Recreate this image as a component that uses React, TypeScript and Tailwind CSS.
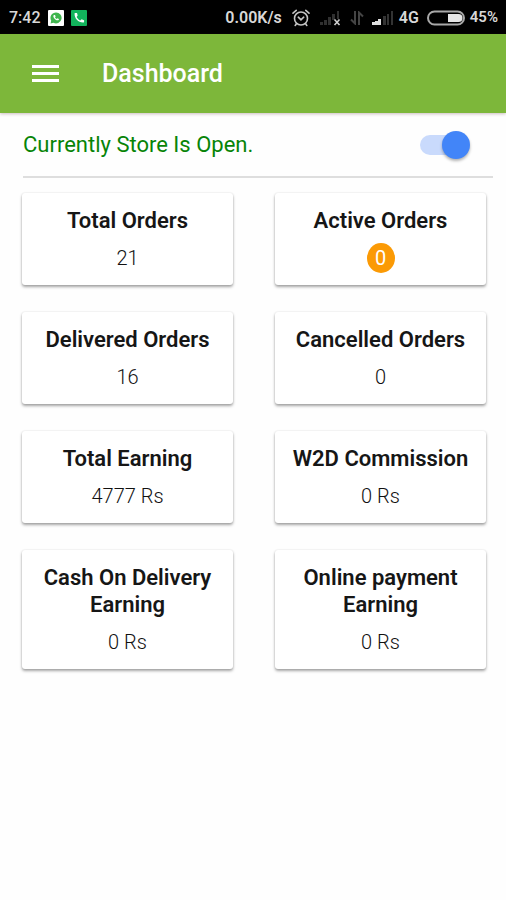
import { useState } from "react";

interface Stat {
  title: string;
  value: string;
  highlight?: boolean;
}

const stats: Stat[] = [
  { title: "Total Orders", value: "21" },
  { title: "Active Orders", value: "0", highlight: true },
  { title: "Delivered Orders", value: "16" },
  { title: "Cancelled Orders", value: "0" },
  { title: "Total Earning", value: "4777 Rs" },
  { title: "W2D Commission", value: "0 Rs" },
  { title: "Cash On Delivery Earning", value: "0 Rs" },
  { title: "Online payment Earning", value: "0 Rs" },
];

function WhatsAppIcon() {
  return (
    <svg viewBox="0 0 16 16" className="w-4 h-4" aria-hidden="true">
      <rect width="16" height="16" rx="1" fill="#fff" />
      <path d="M8 2.4a5.5 5.5 0 0 0-4.8 8.2L2.6 13.4l2.8-.7A5.5 5.5 0 1 0 8 2.4z" fill="#3fb54e" />
      <path
        d="M6 5c-.9.5-.9 1.6 0 2.9 1 1.5 2.3 2.4 3.6 2.4.8 0 1.4-.6 1.4-1.3L9.5 8.2l-.8.8C7.9 8.6 7.3 8 7 7.2l.7-.8L7 5z"
        fill="#fff"
      />
    </svg>
  );
}

function CallIcon() {
  return (
    <svg viewBox="0 0 16 16" className="w-4 h-4" aria-hidden="true">
      <rect width="16" height="16" rx="1" fill="#12b45c" />
      <path
        d="M3.6 3.4c-.4 4.8 4 9.3 8.9 9 .4 0 .6-.3.6-.6V10.2L10.6 9.3 9.2 10.5C7.7 9.8 6.3 8.4 5.6 6.9L6.7 5.5 6 3H4.2c-.3 0-.6.1-.6.4z"
        fill="#fff"
      />
    </svg>
  );
}

function AlarmIcon() {
  return (
    <svg
      viewBox="0 0 18 18"
      className="w-[18px] h-[18px]"
      fill="none"
      stroke="#c4c4c4"
      strokeWidth="1.6"
      strokeLinecap="round"
      aria-hidden="true"
    >
      <circle cx="9" cy="9.5" r="6.5" />
      <path d="M6.3 8.2 9 10.8l2.7-2.6M1 4.2 4.2 1.4M17 4.2l-3.2-2.8M4.6 14.6 3.2 16.4M13.4 14.6l1.4 1.8" />
    </svg>
  );
}

function NoSignalIcon() {
  return (
    <svg viewBox="0 0 22 16" className="w-[22px] h-4" aria-hidden="true">
      <g fill="#303030">
        <rect x="0" y="12" width="3" height="3" />
        <rect x="4" y="10" width="3" height="5" />
        <rect x="8" y="7" width="3" height="8" />
        <rect x="12" y="4" width="3" height="6" />
        <rect x="17" y="1" width="2" height="8" />
      </g>
      <path d="M14.5 9.5l5 5.5M19.5 9.5l-5 5.5" stroke="#d0d0d0" strokeWidth="1.6" />
    </svg>
  );
}

function DataIcon() {
  return (
    <svg viewBox="0 0 14 14" className="w-[14px] h-[14px]" fill="none" stroke="#444" strokeWidth="2" aria-hidden="true">
      <path d="M5 0v12.5L1 8.5M9 14V1.5l4 4" />
    </svg>
  );
}

function SignalIcon() {
  return (
    <svg viewBox="0 0 22 16" className="w-[22px] h-4" aria-hidden="true">
      <g fill="#dedede">
        <rect x="0" y="12" width="3" height="3" />
        <rect x="3" y="11" width="3" height="4" />
        <rect x="6" y="9" width="3" height="6" />
      </g>
      <g fill="#333">
        <rect x="11" y="6" width="3" height="9" />
        <rect x="15" y="4" width="2" height="11" />
        <rect x="19" y="1" width="2" height="14" />
      </g>
    </svg>
  );
}

function BatteryIcon() {
  return (
    <svg viewBox="0 0 38 16" className="w-[38px] h-4" aria-hidden="true">
      <rect x="1" y="1.5" width="36" height="13" rx="6.5" fill="#000" stroke="#a8a8a8" strokeWidth="2" />
      <path d="M21 4h10.5a4 4 0 0 1 0 8H21z" fill="#e6e6e6" />
    </svg>
  );
}

function StatusBar() {
  return (
    <div className="flex h-[34px] items-center justify-between bg-black pt-px pr-2 pl-[9px] text-base font-semibold text-[#d8d8d8]">
      <div className="flex items-center gap-[7px]">
        <span className="font-medium">7:42</span>
        <WhatsAppIcon />
        <CallIcon />
      </div>
      <div className="flex items-center gap-2">
        <div className="flex items-center gap-[10px]">
          <span>0.00K/s</span>
          <AlarmIcon />
          <NoSignalIcon />
        </div>
        <DataIcon />
        <div className="flex items-center gap-[5px]">
          <SignalIcon />
          <span>4G</span>
        </div>
        <div className="flex items-center gap-[5px]">
          <BatteryIcon />
          <span className="text-[15px]">45%</span>
        </div>
      </div>
    </div>
  );
}

function StatCard({ title, value, highlight }: Stat) {
  return (
    <section className="flex flex-col items-center gap-[11px] rounded-[3px] bg-white px-3 pt-[14px] pb-[13px] text-center shadow-[0_2px_3px_rgba(0,0,0,0.35),0_0_2px_rgba(0,0,0,0.12)]">
      <h2 className="text-[22px] leading-[27px] font-semibold text-[#161616]">{title}</h2>
      {highlight ? (
        <p className="-mt-0.5 -mb-px flex h-[30px] w-7 items-center justify-center rounded-[50%] bg-[#fb9a05] text-xl text-white">
          {value}
        </p>
      ) : (
        <p className="text-xl leading-[27px] font-light text-[#111]">{value}</p>
      )}
    </section>
  );
}

export default function App() {
  const [isOpen, setIsOpen] = useState(true);

  return (
    <div className="min-h-screen bg-[#fefefe] font-['Roboto',sans-serif]">
      <StatusBar />
      <header className="flex h-[79px] items-center gap-[43px] bg-[#7db73a] pl-8 text-white shadow-[0_1px_3px_rgba(90,40,50,0.3)]">
        <button type="button" aria-label="Open menu" className="cursor-pointer">
          <svg viewBox="0 0 27 18" className="w-[27px] h-[18px]" fill="#fff" aria-hidden="true">
            <rect width="27" height="3" />
            <rect y="7" width="27" height="3" />
            <rect y="14" width="27" height="3" />
          </svg>
        </button>
        <h1 className="text-[25px] leading-8 font-medium">Dashboard</h1>
      </header>

      <main>
        <div className="ml-[23px] mr-[13px] flex h-[65px] items-center justify-between border-b-2 border-[#dedede] pr-[23px]">
          <label htmlFor="store-open" className="text-[22px] text-[#078407]">
            {isOpen ? "Currently Store Is Open." : "Currently Store Is Closed."}
          </label>
          <input
            id="store-open"
            type="checkbox"
            checked={isOpen}
            onChange={(e) => setIsOpen(e.target.checked)}
            className="grid h-7 w-[50px] cursor-pointer appearance-none items-center before:col-start-1 before:row-start-1 before:h-5 before:w-[46px] before:rounded-full before:bg-[#c9dafc] after:col-start-1 after:row-start-1 after:h-7 after:w-7 after:rounded-full after:bg-gray-100 after:shadow-[0_2px_3px_rgba(0,0,0,0.3)] checked:after:justify-self-end checked:after:bg-[#4285f8]"
          />
        </div>

        <div className="grid grid-cols-2 gap-x-[42px] gap-y-[27px] pt-[15px] pr-5 pb-8 pl-[22px]">
          {stats.map((stat) => (
            <StatCard key={stat.title} {...stat} />
          ))}
        </div>
      </main>
    </div>
  );
}
